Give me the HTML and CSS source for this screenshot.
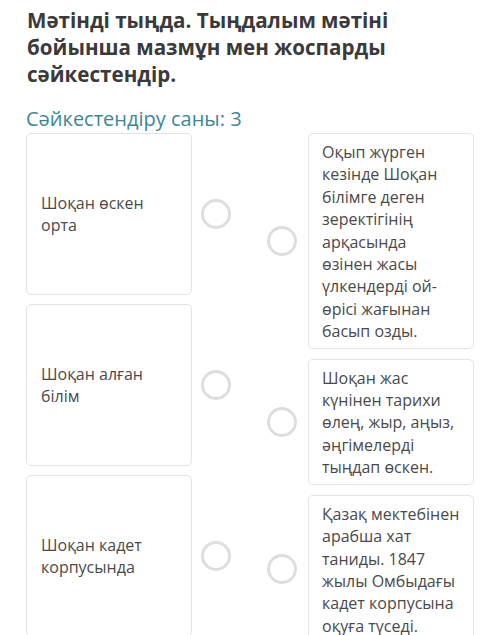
FILE: index.html
```html
<!DOCTYPE html>
<html lang="kk">
<head>
<meta charset="utf-8">
<title>Сәйкестендіру</title>
<link rel="stylesheet" href="styles.css">
</head>
<body>
<div class="page">
  <h1 class="title">Мәтінді тыңда. Тыңдалым мәтіні бойынша мазмұн мен жоспарды сәйкестендір.</h1>
  <div class="count">Сәйкестендіру саны: 3</div>
  <div class="match">
    <div class="col col-left">
      <div class="row">
        <div class="card card-left">Шоқан өскен орта</div>
        <span class="dot"></span>
      </div>
      <div class="row">
        <div class="card card-left">Шоқан алған білім</div>
        <span class="dot"></span>
      </div>
      <div class="row">
        <div class="card card-left">Шоқан кадет корпусында</div>
        <span class="dot"></span>
      </div>
    </div>
    <div class="col col-right">
      <div class="row">
        <span class="dot"></span>
        <div class="card card-right">Оқып жүрген кезінде Шоқан білімге деген зеректігінің арқасында өзінен жасы үлкендерді ой-өрісі жағынан басып озды.</div>
      </div>
      <div class="row">
        <span class="dot"></span>
        <div class="card card-right">Шоқан жас күнінен тарихи өлең, жыр, аңыз, әңгімелерді тыңдап өскен.</div>
      </div>
      <div class="row">
        <span class="dot"></span>
        <div class="card card-right">Қазақ мектебінен арабша хат таниды. 1847 жылы Омбыдағы кадет корпусына оқуға түседі.</div>
      </div>
    </div>
  </div>
</div>
</body>
</html>
```

FILE: styles.css
```css
html, body {
  margin: 0;
  padding: 0;
  background: #ffffff;
}
body {
  font-family: "Open Sans", "Noto Sans", sans-serif;
  color: #3c3c3c;
}
.page {
  padding: 7px 0 0 27px;
  width: 473px;
  box-sizing: border-box;
}
.title {
  margin: 0;
  font-size: 20.6px;
  line-height: 27px;
  font-weight: 700;
  color: #3a3a3a;
  width: 390px;
}
.count {
  margin-top: 19px;
  font-size: 20px;
  line-height: 24px;
  color: #3d8795;
  margin-left: -1px;
}
.match {
  display: flex;
  margin-top: 2px;
  margin-left: -1px;
}
.col {
  display: flex;
  flex-direction: column;
}
.col-left {
  gap: 9px;
  width: 205px;
}
.col-right {
  gap: 10px;
  margin-left: 36px;
}
.row {
  display: flex;
  align-items: center;
}
.card {
  box-sizing: border-box;
  background: #fff;
  border: 1px solid #e3e3e3;
  border-radius: 5px;
  font-size: 16px;
  line-height: 22.4px;
  color: #4a4a4a;
}
.card-left {
  width: 166px;
  height: 162px;
  padding: 0 14px;
  display: flex;
  align-items: center;
}
.card-right {
  width: 166px;
  padding: 7px 13px 5px 13px;
}
.dot {
  flex: none;
  width: 30px;
  height: 30px;
  box-sizing: border-box;
  border: 3px solid #dedede;
  border-radius: 50%;
}
.col-left .dot {
  margin-left: 9px;
}
.col-right .dot {
  margin-right: 11px;
}
```
